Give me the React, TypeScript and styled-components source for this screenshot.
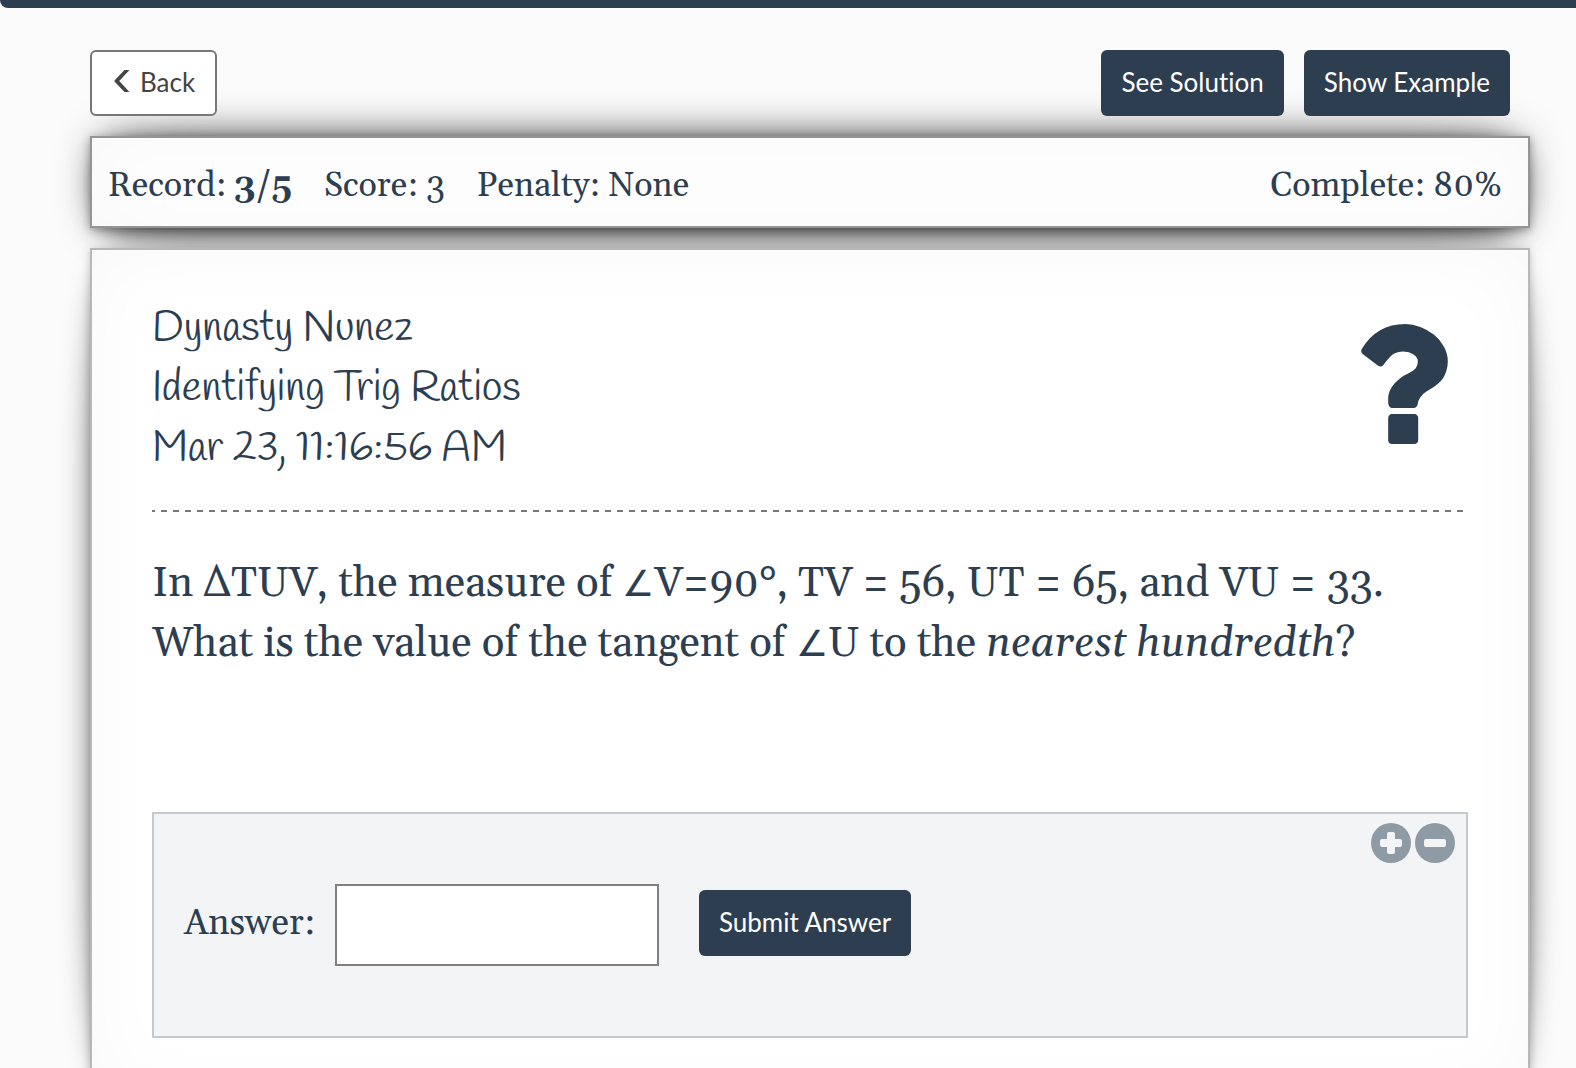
import React, { useState } from "react";
import styled, { createGlobalStyle, css } from "styled-components";

const navy = "#2d3e50";
const serif = 'Gelasio, Georgia, "Liberation Serif", serif';
const sans = "Lato, sans-serif";

const GlobalStyle = createGlobalStyle`
  *, *::before, *::after { box-sizing: border-box; }
  body { margin: 0; background: #fff; }
`;

const Page = styled.div`
  position: relative;
  isolation: isolate;
  height: 100vh;
  overflow: hidden auto;
  scrollbar-width: none;
  background: #fbfbfb;
  color: ${navy};
  font-family: ${serif};
`;

const TopBar = styled.header`
  height: 8px;
  background: ${navy};
  border-bottom-left-radius: 8px;
`;

const Content = styled.main`
  display: flex;
  flex-direction: column;
  gap: 20px;
  padding: 42px 46px 60px 90px;
`;

const Toolbar = styled.nav`
  display: flex;
  justify-content: space-between;
  padding-right: 20px;
`;

const ButtonGroup = styled.div`
  display: flex;
  gap: 20px;
`;

const Button = styled.button<{ $outline?: boolean }>`
  display: inline-flex;
  align-items: center;
  gap: 10px;
  height: 66px;
  padding: 0 20px 2px;
  border: 0;
  border-radius: 6px;
  background: ${navy};
  color: #fff;
  font: 26px ${sans};
  font-variant-ligatures: none;
  white-space: nowrap;
  cursor: pointer;
  ${(p) =>
    p.$outline &&
    css`
      border: 2px solid #777;
      background: #fff;
      color: #444;
    `}
`;

const Sheet = styled.section`
  position: relative;
  background: #fff;

  &::before {
    content: "";
    position: absolute;
    z-index: -1;
  }
`;

const StatusBar = styled(Sheet)`
  display: flex;
  align-items: center;
  gap: 32px;
  min-height: 92px;
  padding: 8px 26px 0 16px;
  border: 2px solid #959595;
  box-shadow: 0 2px 8px rgba(0, 0, 0, 0.3), inset 0 0 80px rgba(0, 0, 0, 0.03);
  font-size: 34px;

  &::before {
    inset: 0 10px;
    border-radius: 100px / 10px;
    box-shadow: 0 0 40px rgba(0, 0, 0, 0.8), 0 14px 28px rgba(0, 0, 0, 0.35);
  }
`;

const StatusItem = styled.span<{ $last?: boolean }>`
  white-space: nowrap;
  margin-left: ${(p) => (p.$last ? "auto" : "0")};
`;

const Paper = styled(Sheet)`
  padding: 49px 60px 60px;
  border: 2px solid #b8b8b8;
  box-shadow: 0 2px 8px rgba(0, 0, 0, 0.2), inset 0 0 80px rgba(0, 0, 0, 0.03);

  &::before {
    inset: 20px 0;
    border-radius: 20px / 200px;
    box-shadow: 0 0 30px rgba(0, 0, 0, 0.6);
  }
`;

const PaperHeader = styled.header`
  display: flex;
  justify-content: space-between;
  padding: 0 20px 33px 0;
  background: repeating-linear-gradient(
      90deg,
      #777 0 3px,
      transparent 3px 9px,
      #777 9px 12px
    )
    left bottom / 100% 2px no-repeat;
`;

const Note = styled.div`
  font-family: Handlee, ${sans};
  font-size: 42px;
  line-height: 60px;
`;

const Mark = styled.div`
  padding-top: 25px;
`;

const Question = styled.p`
  min-height: 258px;
  margin: 42px 0 0;
  font-size: 42px;
  line-height: 60px;
`;

const Angle = styled.span`
  font-family: "DejaVu Sans", sans-serif;
  font-size: 36px;
  font-weight: 200;
  line-height: 1;
`;

const AnswerBox = styled.form`
  position: relative;
  display: flex;
  align-items: center;
  min-height: 226px;
  padding: 0 30px 4px;
  border: 2px solid #c5c9cc;
  background: rgba(45, 62, 80, 0.06);
`;

const Label = styled.label`
  font-size: 36px;
`;

const AnswerInput = styled.input`
  width: 324px;
  height: 82px;
  margin: 4px 40px 0 20px;
  padding: 0 20px;
  border: 2px solid #808080;
  border-radius: 0;
  background: #fff;
  color: ${navy};
  font: 36px ${serif};
`;

const ZoomControls = styled.div`
  position: absolute;
  top: 9px;
  right: 11px;
  display: flex;
  gap: 4px;
`;

const RoundButton = styled.button`
  display: grid;
  place-items: center;
  width: 40px;
  height: 40px;
  padding: 0;
  border: 0;
  border-radius: 50%;
  background: #8f9ba4;
  cursor: pointer;
`;

const Chevron = () => (
  <svg width="18" height="26" viewBox="0 0 18 26" fill="currentColor" aria-hidden="true">
    <path d="M12.5 1H17.5L7.2 12L17.5 23H12.5L2.5 12.6V11.4Z" />
  </svg>
);

const QuestionMark = () => (
  <svg width="87" height="120" viewBox="94 0 928 1280" fill={navy} aria-hidden="true">
    <path
      transform="translate(0 1280) scale(1 -1)"
      d="M704 280v-240q0 -16 -12 -28t-28 -12h-240q-16 0 -28 12t-12 28v240q0 16 12 28t28 12h240q16 0 28 -12t12 -28zM1020 880q0 -54 -15.5 -101t-35 -76.5t-55 -59.5t-57.5 -43.5t-61 -35.5q-41 -23 -68.5 -65t-27.5 -67q0 -17 -12 -32.5t-28 -15.5h-240q-15 0 -25.5 18.5t-10.5 37.5v45q0 83 65 156.5t143 108.5q59 27 84 56t25 76q0 42 -46.5 74t-107.5 32q-65 0 -108 -29q-35 -25 -107 -115q-13 -16 -31 -16q-12 0 -25 8l-164 125q-13 10 -15.5 25t5.5 28q160 266 464 266q80 0 161 -31t146 -83t106 -127.5t41 -158.5z"
    />
  </svg>
);

const Sign = ({ plus }: { plus?: boolean }) => (
  <svg width="22" height="22" viewBox="0 0 22 22" fill="#f2f4f6" aria-hidden="true">
    <rect x="0" y="7" width="22" height="8" rx="2" />
    {plus && <rect x="7" y="0" width="8" height="22" rx="2" />}
  </svg>
);

export default function App() {
  const [answer, setAnswer] = useState("");

  return (
    <>
      <GlobalStyle />
      <Page>
        <TopBar />
        <Content>
          <Toolbar>
            <Button type="button" $outline>
              <Chevron />
              Back
            </Button>
            <ButtonGroup>
              <Button type="button">See Solution</Button>
              <Button type="button">Show Example</Button>
            </ButtonGroup>
          </Toolbar>

          <StatusBar>
            <StatusItem>
              Record: <b>3/5</b>
            </StatusItem>
            <StatusItem>Score: 3</StatusItem>
            <StatusItem>Penalty: None</StatusItem>
            <StatusItem $last>Complete: 80%</StatusItem>
          </StatusBar>

          <Paper>
            <PaperHeader>
              <Note>
                <div>Dynasty Nunez</div>
                <div>Identifying Trig Ratios</div>
                <div>Mar 23, 11:16:56 AM</div>
              </Note>
              <Mark>
                <QuestionMark />
              </Mark>
            </PaperHeader>

            <Question>
              In ΔTUV, the measure of <Angle>∠</Angle>V=90°, TV = 56, UT = 65, and VU = 33. What is
              the value of the tangent of <Angle>∠</Angle>U to the <em>nearest hundredth</em>?
            </Question>

            <AnswerBox onSubmit={(e) => e.preventDefault()}>
              <Label htmlFor="answer">Answer:</Label>
              <AnswerInput
                id="answer"
                type="text"
                autoComplete="off"
                value={answer}
                onChange={(e) => setAnswer(e.target.value)}
              />
              <Button type="submit">Submit Answer</Button>
              <ZoomControls>
                <RoundButton type="button" aria-label="Larger">
                  <Sign plus />
                </RoundButton>
                <RoundButton type="button" aria-label="Smaller">
                  <Sign />
                </RoundButton>
              </ZoomControls>
            </AnswerBox>
          </Paper>
        </Content>
      </Page>
    </>
  );
}
